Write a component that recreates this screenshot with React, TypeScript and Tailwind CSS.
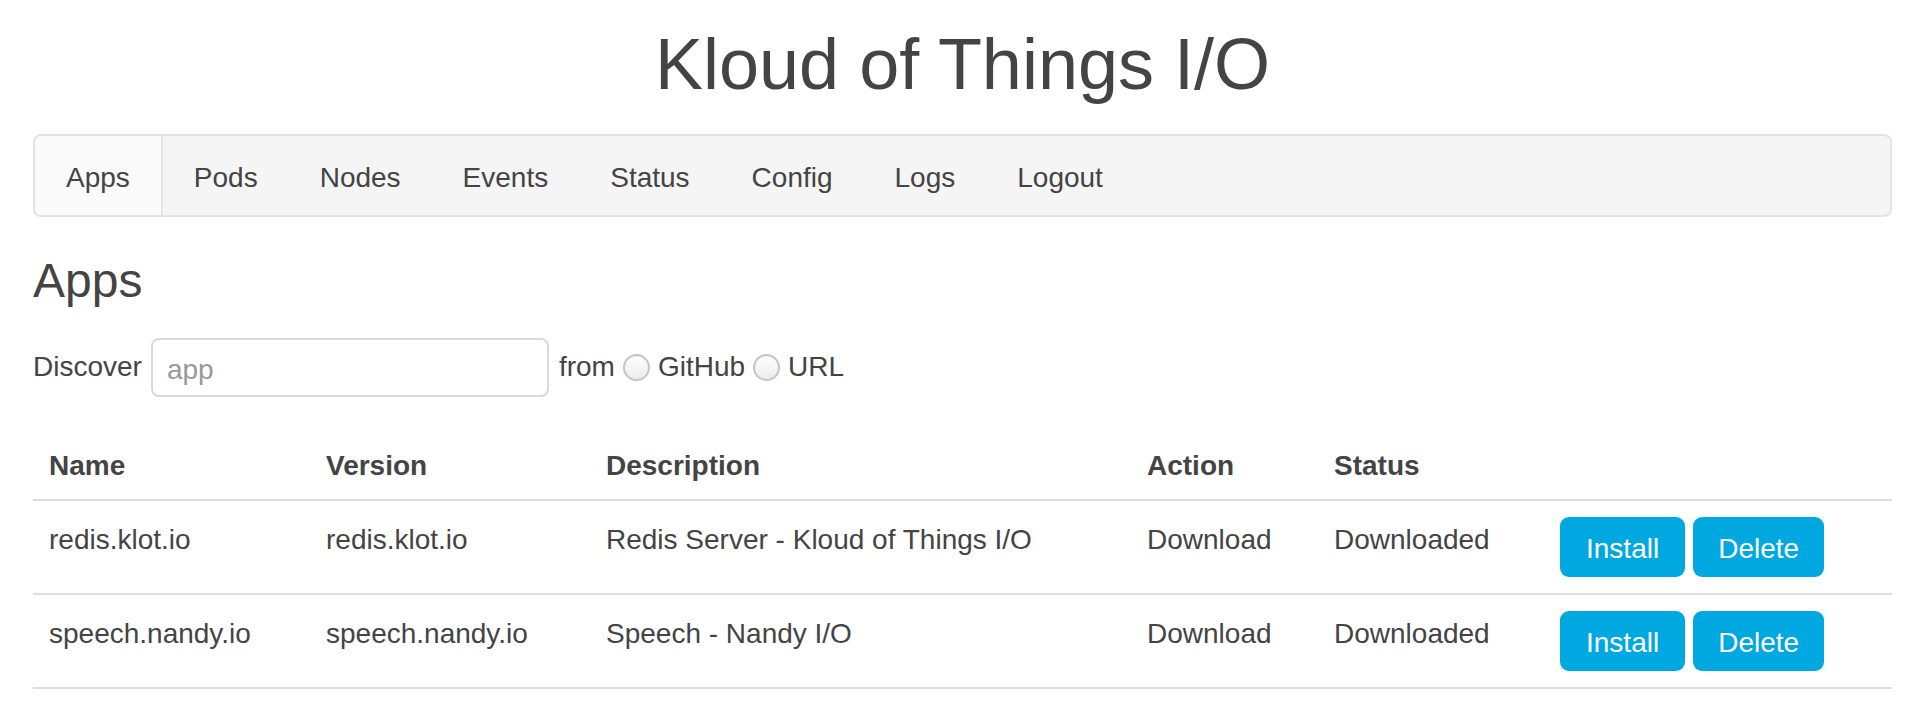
import React from 'react';

const navItems = ['Apps', 'Pods', 'Nodes', 'Events', 'Status', 'Config', 'Logs', 'Logout'];

const apps = [
  { name: 'redis.klot.io', version: 'redis.klot.io', description: 'Redis Server - Kloud of Things I/O', action: 'Download', status: 'Downloaded' },
  { name: 'speech.nandy.io', version: 'speech.nandy.io', description: 'Speech - Nandy I/O', action: 'Download', status: 'Downloaded' },
];

const Radio: React.FC = () => (
  <span className="inline-block w-[27px] h-[27px] rounded-full border-2 border-[#c4c4c4] bg-gradient-to-b from-white to-[#ececec] shadow-[inset_0_1px_1px_rgba(0,0,0,0.05)]" />
);

const cell = 'px-[16px] pt-[19px] pb-[13px] leading-[40px] align-top';

export default function App() {
  return (
    <div className="min-h-[726px] bg-white text-[#444] font-['Liberation_Sans',Arial,sans-serif] pl-[33px] pr-[38px]">
      <h1 className="text-center text-[72px] leading-[1.1] pt-[25px] font-normal">Kloud of Things I/O</h1>

      <nav className="mt-[30px] h-[83px] flex border-2 border-[#e3e3e3] rounded-[8px] bg-[#f5f5f5] overflow-hidden">
        {navItems.map((item, i) => (
          <a
            key={item}
            className={`flex items-center px-[31px] pt-[5px] text-[28px] text-[#444] ${i === 0 ? 'bg-[#fafafa] border-r-2 border-[#e3e3e3]' : ''}`}
          >
            {item}
          </a>
        ))}
      </nav>

      <h3 className="mt-[38px] mb-[-2px] text-[48px] leading-[1.1] font-normal">Apps</h3>

      <div className="mt-[32px] flex items-center text-[28px]">
        <span>Discover</span>
        <div className="ml-[9px] w-[398px] h-[59px] border-2 border-[#d9d9d9] rounded-[8px] flex items-center px-[14px]">
          <span className="text-[#999] pt-[5px]">app</span>
        </div>
        <span className="ml-[10px]">from</span>
        <span className="ml-[8px] flex"><Radio /></span>
        <span className="ml-[8px]">GitHub</span>
        <span className="ml-[8px] flex"><Radio /></span>
        <span className="ml-[8px]">URL</span>
      </div>

      <table className="mt-[30px] w-full table-fixed border-collapse text-[28px]">
        <colgroup>
          <col className="w-[277px]" />
          <col className="w-[280px]" />
          <col className="w-[541px]" />
          <col className="w-[187px]" />
          <col className="w-[226px]" />
          <col />
        </colgroup>
        <thead>
          <tr className="border-b-2 border-[#ddd]">
            {['Name', 'Version', 'Description', 'Action', 'Status', ''].map((h, i) => (
              <th key={i} className="text-left font-bold leading-[40px] px-[16px] pt-[19px] pb-[13px] align-bottom">{h}</th>
            ))}
          </tr>
        </thead>
        <tbody>
          {apps.map((app) => (
            <tr key={app.name} className="border-b-2 border-[#ddd]">
              <td className={cell}>{app.name}</td>
              <td className={cell}>{app.version}</td>
              <td className={cell}>{app.description}</td>
              <td className={cell}>{app.action}</td>
              <td className={cell}>{app.status}</td>
              <td className="px-[16px] py-[16px] align-top">
                <div className="flex gap-[8px]">
                  <button className="h-[60px] px-[26px] pt-[5px] rounded-[9px] bg-[#00a8e2] text-white text-[28px] leading-none">Install</button>
                  <button className="h-[60px] px-[25px] pt-[5px] rounded-[9px] bg-[#00a8e2] text-white text-[28px] leading-none">Delete</button>
                </div>
              </td>
            </tr>
          ))}
        </tbody>
      </table>
    </div>
  );
}
